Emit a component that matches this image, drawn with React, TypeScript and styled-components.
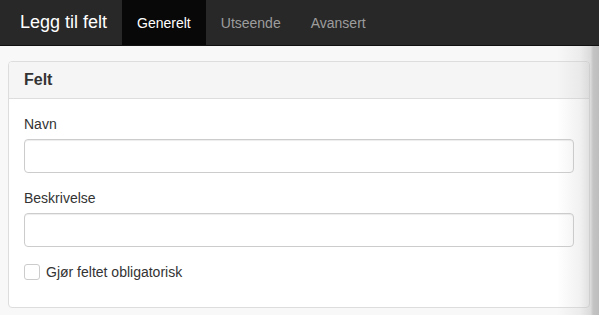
import React from 'react';
import styled, { createGlobalStyle } from 'styled-components';

const GlobalStyle = createGlobalStyle`
    html, body {
        margin: 0;
        padding: 0;
        background: #f8f8f8;
        font-family: "Liberation Sans", Arial, sans-serif;
        color: #333;
        overflow: hidden;
    }
`;

const Page = styled.div`
    position: relative;
    width: 599px;
    height: 315px;
`;

const Navbar = styled.nav`
    display: flex;
    align-items: stretch;
    height: 45px;
    background: #282828;
    border-bottom: 1px solid #111;
`;

const Brand = styled.div`
    display: flex;
    align-items: center;
    padding: 0 15px 0 20px;
    color: #fff;
    font-size: 18px;
`;

const Tab = styled.div<{ $active?: boolean }>`
    display: flex;
    align-items: center;
    padding: 0 15px;
    font-size: 14px;
    color: ${(p) => (p.$active ? '#fff' : '#9d9d9d')};
    background: ${(p) => (p.$active ? '#080808' : 'transparent')};
`;

const Content = styled.main`
    padding: 15px 9px 0 8px;
`;

const Panel = styled.section`
    background: #fff;
    border: 1px solid #ddd;
    border-radius: 4px;
    overflow: hidden;
`;

const PanelHeading = styled.div`
    display: flex;
    align-items: center;
    height: 36px;
    padding: 0 15px;
    background: #f5f5f5;
    border-bottom: 1px solid #ddd;
    font-size: 16px;
    font-weight: bold;
`;

const PanelBody = styled.div`
    padding: 15px;
`;

const FormGroup = styled.div`
    margin-bottom: 15px;
`;

const Label = styled.label`
    display: block;
    font-size: 14px;
    line-height: 20px;
    margin-bottom: 5px;
`;

const Input = styled.input`
    display: block;
    box-sizing: border-box;
    width: 100%;
    height: 34px;
    border: 1px solid #ccc;
    border-radius: 4px;
    box-shadow: inset 0 1px 1px rgba(0, 0, 0, 0.075);
    background: #fff;
`;

const CheckRow = styled.label`
    display: flex;
    align-items: center;
    gap: 6px;
    font-size: 14px;
    height: 20px;
    margin-bottom: 10px;
`;

const CheckBox = styled.span`
    width: 14px;
    height: 14px;
    border: 1px solid #ccc;
    border-radius: 3px;
    background: #fff;
`;

const EdgeShade = styled.div`
    position: absolute;
    top: 46px;
    right: 0;
    bottom: 0;
    width: 42px;
    pointer-events: none;
    background: linear-gradient(
        to right,
        rgba(200, 200, 200, 0) 0%,
        rgba(200, 200, 200, 0.25) 55%,
        rgba(190, 190, 190, 0.5) 80%,
        #c4c4c4 86%,
        #bdbdbd 100%
    );
`;

export default function App() {
    return (
        <Page>
            <GlobalStyle />
            <Navbar>
                <Brand>Legg til felt</Brand>
                <Tab $active>Generelt</Tab>
                <Tab>Utseende</Tab>
                <Tab>Avansert</Tab>
            </Navbar>
            <Content>
                <Panel>
                    <PanelHeading>Felt</PanelHeading>
                    <PanelBody>
                        <FormGroup>
                            <Label>Navn</Label>
                            <Input />
                        </FormGroup>
                        <FormGroup>
                            <Label>Beskrivelse</Label>
                            <Input />
                        </FormGroup>
                        <CheckRow>
                            <CheckBox />
                            Gjør feltet obligatorisk
                        </CheckRow>
                    </PanelBody>
                </Panel>
            </Content>
            <EdgeShade />
        </Page>
    );
}
